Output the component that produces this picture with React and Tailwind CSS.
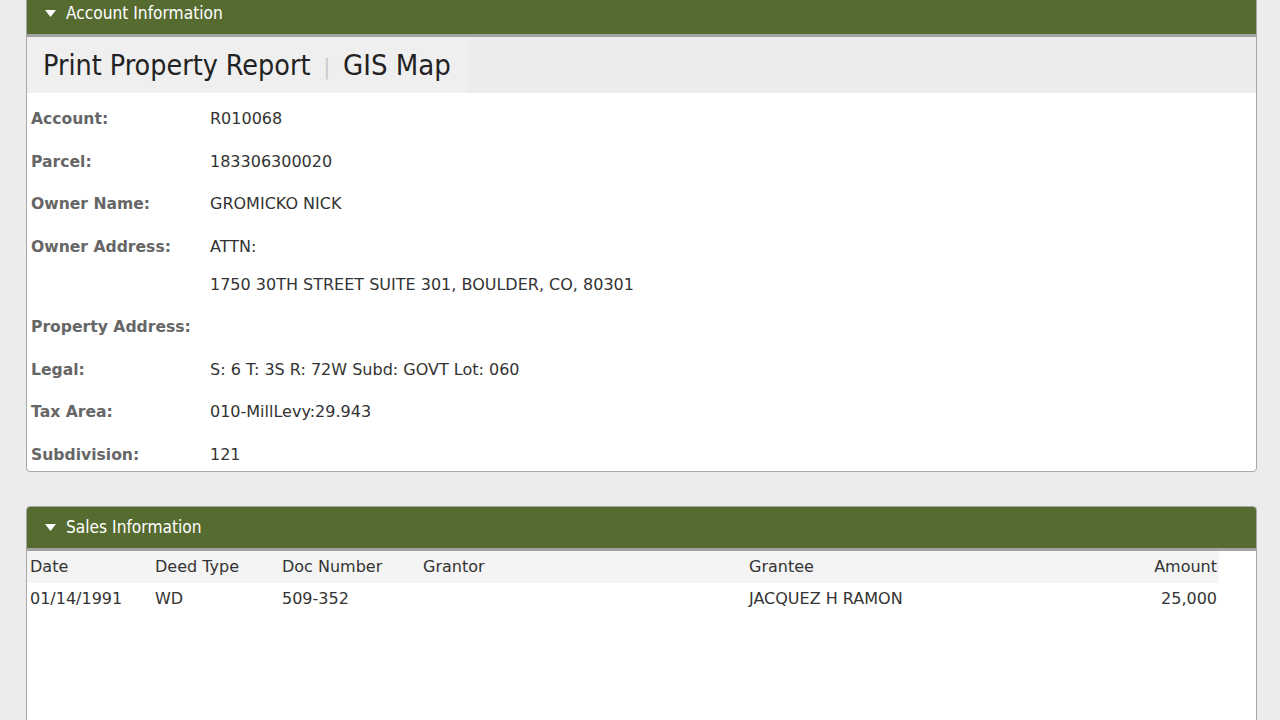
import React from "react";

const font = { fontFamily: '"DejaVu Sans", "Liberation Sans", sans-serif' };
const condensed = { fontFamily: '"DejaVu Sans Condensed", "DejaVu Sans", sans-serif' };

function Caret() {
  return (
    <svg width="11" height="7" viewBox="0 0 11 7" className="mr-[10px] shrink-0">
      <path d="M0 0 L11 0 L5.5 7 Z" fill="#ffffff" />
    </svg>
  );
}

function PanelHeader({ title }) {
  return (
    <div
      className="h-[44px] flex items-center pl-[18px] bg-[#556b2f] border-b-[3px] border-[#a3a3a3] text-white text-[17.2px]"
      style={condensed}
    >
      <Caret />
      <span>{title}</span>
    </div>
  );
}

const rows = [
  { label: "Account:", value: ["R010068"] },
  { label: "Parcel:", value: ["183306300020"] },
  { label: "Owner Name:", value: ["GROMICKO NICK"] },
  { label: "Owner Address:", value: ["ATTN:", "1750 30TH STREET SUITE 301, BOULDER, CO, 80301"] },
  { label: "Property Address:", value: [] },
  { label: "Legal:", value: ["S: 6 T: 3S R: 72W Subd: GOVT Lot: 060"] },
  { label: "Tax Area:", value: ["010-MillLevy:29.943"] },
  { label: "Subdivision:", value: ["121"] },
];

const sales = [
  { date: "01/14/1991", deed: "WD", doc: "509-352", grantor: "", grantee: "JACQUEZ H RAMON", amount: "25,000" },
];

export default function App() {
  return (
    <div className="min-h-screen bg-[#ececec] pl-[26px] pr-[23px] pb-10 overflow-hidden" style={font}>
      <div className="-mt-[8px] bg-white border border-[#a8a8a8] rounded-[4px] overflow-hidden">
        <PanelHeader title="Account Information" />
        <div className="h-[56px] bg-[#ececec] flex">
          <div
            className="bg-[#efefef] flex items-center pl-[16px] pt-[2px] text-[28.4px] text-[#222] w-[441px] whitespace-nowrap"
            style={condensed}
          >
            <span>Print Property Report</span>
            <span className="mx-[13px] text-[#c8c8c8] text-[22px]">|</span>
            <span className="text-[29px]">GIS Map</span>
          </div>
        </div>
        <div className="pt-[5px] pl-[4px] text-[16px]">
          {rows.map((r) => (
            <div key={r.label} className="flex py-[10px] leading-[22.5px] last:pb-[5px]">
              <div className="w-[179px] font-bold text-[#666] text-[15.6px]">{r.label}</div>
              <div className="text-[#333]">
                {r.value.map((v, i) => (
                  <div key={i} className={i > 0 ? "mt-[15.5px]" : ""}>
                    {v}
                  </div>
                ))}
              </div>
            </div>
          ))}
        </div>
      </div>

      <div className="mt-[34px] bg-white border border-[#a8a8a8] rounded-[4px] overflow-hidden h-[260px]">
        <PanelHeader title="Sales Information" />
        <table className="w-[1192px] text-[16px] text-[#333] border-collapse table-fixed">
          <thead>
            <tr className="bg-[#f4f4f4] h-[32px]">
              <th className="w-[125px] text-left font-normal pl-[3px]">Date</th>
              <th className="w-[127px] text-left font-normal pl-[3px]">Deed Type</th>
              <th className="w-[141px] text-left font-normal pl-[3px]">Doc Number</th>
              <th className="w-[326px] text-left font-normal pl-[3px]">Grantor</th>
              <th className="text-left font-normal pl-[3px]">Grantee</th>
              <th className="w-[150px] text-right font-normal pr-[2px]">Amount</th>
            </tr>
          </thead>
          <tbody>
            {sales.map((s) => (
              <tr key={s.doc} className="h-[32px]">
                <td className="pl-[3px]">{s.date}</td>
                <td className="pl-[3px]">{s.deed}</td>
                <td className="pl-[3px]">{s.doc}</td>
                <td className="pl-[3px]">{s.grantor}</td>
                <td className="pl-[3px]">{s.grantee}</td>
                <td className="text-right pr-[2px]">{s.amount}</td>
              </tr>
            ))}
          </tbody>
        </table>
      </div>
    </div>
  );
}
